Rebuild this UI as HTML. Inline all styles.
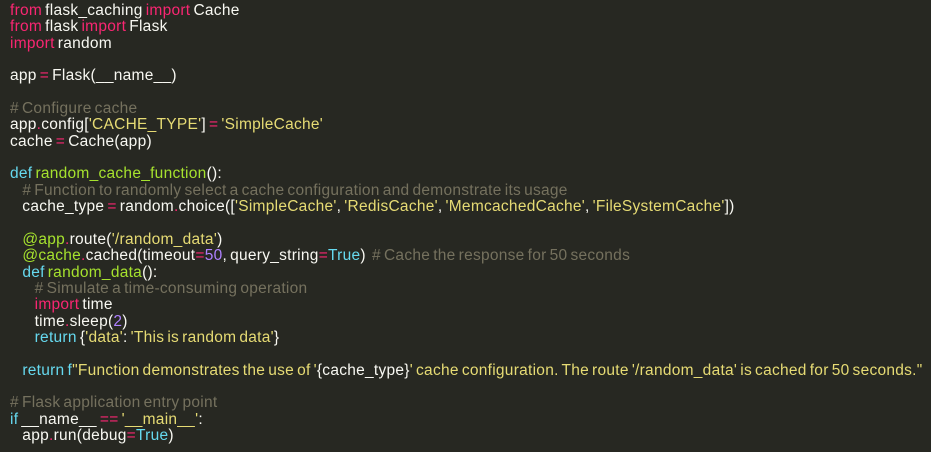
<!DOCTYPE html>
<html><head><meta charset="utf-8"><style>
html,body{margin:0;padding:0;background:#272822;width:931px;height:452px;overflow:hidden}
pre{margin:0;position:absolute;left:10px;top:3px;font-family:"Liberation Sans",sans-serif;font-size:15.5px;line-height:16.35px;color:#f8f8f2;word-spacing:-1.5px;letter-spacing:0.27px}
.k{color:#f92672}.c{color:#75715e}.s{color:#e6db74}.g{color:#a6e22e}.b{color:#66d9ef}.p{color:#ae81ff}
</style></head><body><pre><span class="k">from</span> flask_caching <span class="k">import</span> Cache
<span class="k">from</span> flask <span class="k">import</span> Flask
<span class="k">import</span> random

app <span class="k">=</span> Flask(__name__)

<span class="c"># Configure cache</span>
app<span class="k">.</span>config[<span class="s">'CACHE_TYPE'</span>] <span class="k">=</span> <span class="s">'SimpleCache'</span>
cache <span class="k">=</span> Cache(app)

<span class="b">def</span> <span class="g">random_cache_function</span>():
    <span class="c"># Function to randomly select a cache configuration and demonstrate its usage</span>
    cache_type <span class="k">=</span> random<span class="k">.</span>choice([<span class="s">'SimpleCache'</span>, <span class="s">'RedisCache'</span>, <span class="s">'MemcachedCache'</span>, <span class="s">'FileSystemCache'</span>])

    <span class="g">@app</span><span class="k">.</span>route(<span class="s">'/random_data'</span>)
    <span class="g">@cache</span><span class="k">.</span>cached(timeout<span class="k">=</span><span class="p">50</span>, query_string<span class="k">=</span><span class="b">True</span>)  <span class="c"># Cache the response for 50 seconds</span>
    <span class="b">def</span> <span class="g">random_data</span>():
        <span class="c"># Simulate a time-consuming operation</span>
        <span class="k">import</span> time
        time<span class="k">.</span>sleep(<span class="p">2</span>)
        <span class="b">return</span> {<span class="s">'data'</span>: <span class="s">'This is random data'</span>}

    <span class="b">return</span> <span class="b">f</span><span class="s">"Function demonstrates the use of '</span>{cache_type}<span class="s">' cache configuration. The route '/random_data' is cached for 50 seconds."</span>

<span class="c"># Flask application entry point</span>
<span class="b">if</span> __name__ <span class="k">==</span> <span class="s">'__main__'</span>:
    app<span class="k">.</span>run(debug<span class="k">=</span><span class="b">True</span>)</pre></body></html>
